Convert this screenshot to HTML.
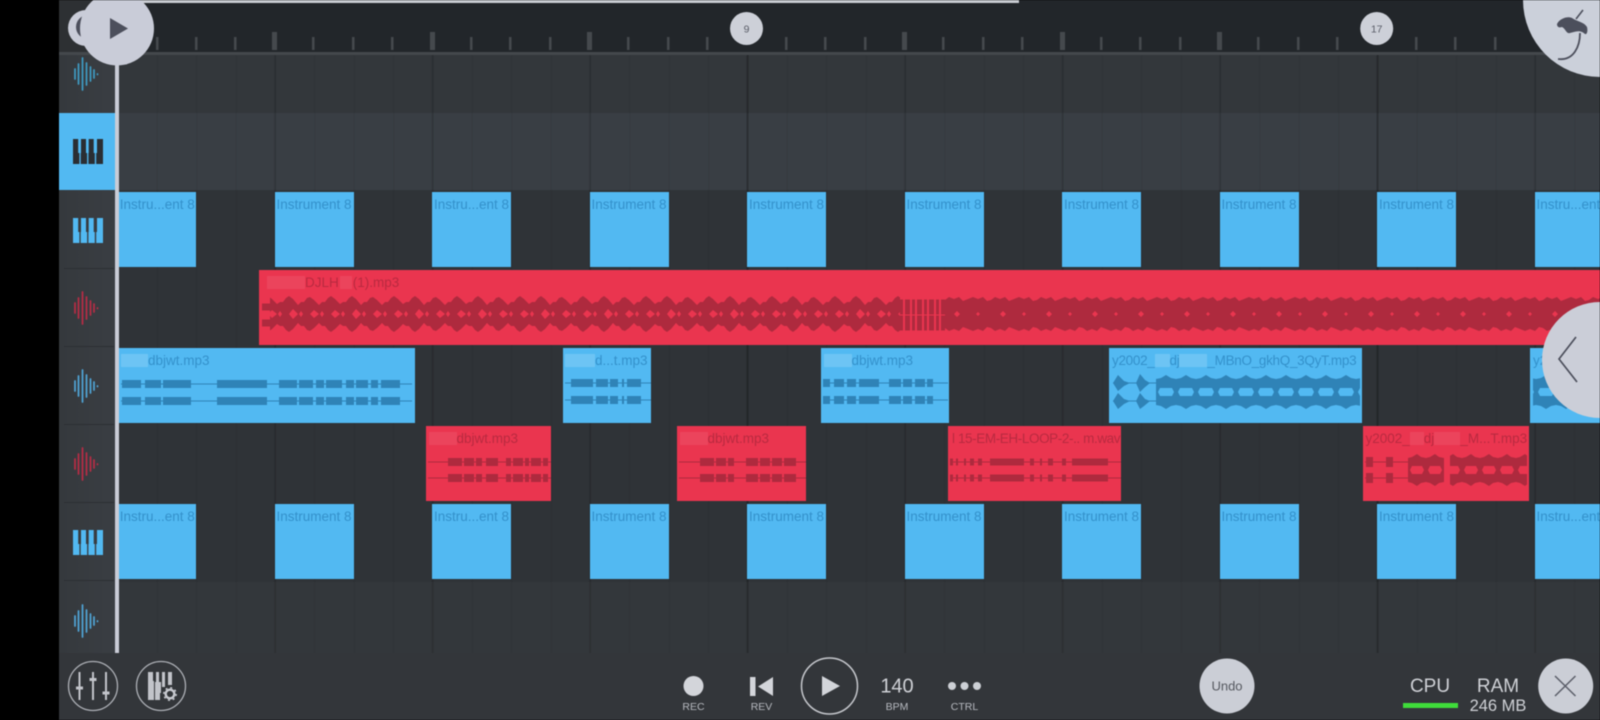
<!DOCTYPE html>
<html><head><meta charset="utf-8"><style>
html,body{margin:0;padding:0;background:#000;width:1600px;height:720px;overflow:hidden}
#w{position:relative;width:1600px;height:720px;overflow:hidden;background:#000;filter:blur(.55px);font-family:"Liberation Sans",sans-serif}
#w>div{position:absolute}
.clip{position:absolute;overflow:hidden;white-space:nowrap;font-size:13.5px;line-height:16px;padding-top:5px;box-sizing:border-box}
.b{background:#52b9f2;color:#3491cb;top:192px;height:75px;width:79px;text-align:center}
.r{background:#ea354f;color:#b92a40}
.a{background:#52b9f2;color:#3491cb}
.p{display:inline-block;height:13px;vertical-align:-2px;opacity:.16;background:#fff}
.lab{position:absolute;color:#b6b9bf;font-size:10.500px;line-height:12px;text-align:center;width:60px}
.grid{position:absolute;left:119px;width:1481px;background-image:linear-gradient(90deg,rgba(0,0,0,.14) 0 2px,transparent 2px),linear-gradient(90deg,rgba(0,0,0,.1) 0 2px,transparent 2px),linear-gradient(90deg,rgba(0,0,0,.07) 0 1px,transparent 1px);background-size:630px 100%,157.500px 100%,39.375px 100%;background-position:-2.500px 0,-2.500px 0,-1.500px 0}
</style></head><body><div id="w">
<div style="left:59px;top:0;width:1541px;height:720px;background:#33373b"></div>
<div style="left:59px;top:0;width:1541px;height:53px;background:#22262a"></div>
<div style="left:59px;top:0;width:60px;height:56px;background:#2d3033"></div>
<div style="left:119px;top:0;width:900px;height:3px;background:#c9ccd2"></div>
<div style="left:59px;top:52px;width:1541px;height:3px;background:#44484c"></div>
<div style="left:59px;top:55px;width:56px;height:598px;background:linear-gradient(90deg,#35393d,#3a3e43)"></div>
<div class="grid" style="top:55px;height:58px;background-color:#33373b"></div>
<div class="grid" style="top:113px;height:77px;background-color:#393e44"></div>
<div class="grid" style="top:190px;height:463px;background-color:#2f3337"></div>
<div style="left:119px;top:582px;width:1481px;height:71px;background:rgba(255,255,255,.025)"></div>
<div style="left:59px;top:113px;width:56px;height:77px;background:#52b9f2"></div>
<div style="left:64px;top:268px;width:50px;height:1px;background:#2c2f33"></div>
<div style="left:64px;top:346px;width:50px;height:1px;background:#2c2f33"></div>
<div style="left:64px;top:424px;width:50px;height:1px;background:#2c2f33"></div>
<div style="left:64px;top:502px;width:50px;height:1px;background:#2c2f33"></div>
<div style="left:64px;top:580px;width:50px;height:1px;background:#2c2f33"></div>
<div style="left:59px;top:653px;width:1541px;height:67px;background:#33363a"></div>

<!-- row 1 -->
<div class="clip b" style="left:119px;width:76.500px">Instru...ent 8</div>
<div class="clip b" style="left:274.500px">Instrument 8</div>
<div class="clip b" style="left:432px">Instru...ent 8</div>
<div class="clip b" style="left:589.500px">Instrument 8</div>
<div class="clip b" style="left:747px">Instrument 8</div>
<div class="clip b" style="left:904.500px">Instrument 8</div>
<div class="clip b" style="left:1062px">Instrument 8</div>
<div class="clip b" style="left:1219.500px">Instrument 8</div>
<div class="clip b" style="left:1377px">Instrument 8</div>
<div class="clip b" style="left:1534.500px">Instru...ent 8</div>
<!-- row 5 -->
<div class="clip b" style="top:504px;left:119px;width:76.500px">Instru...ent 8</div>
<div class="clip b" style="top:504px;left:274.500px">Instrument 8</div>
<div class="clip b" style="top:504px;left:432px">Instru...ent 8</div>
<div class="clip b" style="top:504px;left:589.500px">Instrument 8</div>
<div class="clip b" style="top:504px;left:747px">Instrument 8</div>
<div class="clip b" style="top:504px;left:904.500px">Instrument 8</div>
<div class="clip b" style="top:504px;left:1062px">Instrument 8</div>
<div class="clip b" style="top:504px;left:1219.500px">Instrument 8</div>
<div class="clip b" style="top:504px;left:1377px">Instrument 8</div>
<div class="clip b" style="top:504px;left:1534.500px">Instru...ent 8</div>
<!-- audio clips -->
<div class="clip r" style="left:259px;top:270px;width:1341px;height:75px;padding-left:8px"><span class="p" style="width:38px;opacity:.08"></span>DJLH<span class="p" style="width:12px;opacity:.08;margin:0 1px"></span>(1).mp3</div>
<div class="clip a" style="left:119px;top:348px;width:296px;height:75px;padding-left:2px"><span class="p" style="width:27px"></span>dbjwt.mp3</div>
<div class="clip a" style="left:563px;top:348px;width:88px;height:75px;padding-left:2px"><span class="p" style="width:30px"></span>d...t.mp3</div>
<div class="clip a" style="left:820.500px;top:348px;width:128px;height:75px;padding-left:3px"><span class="p" style="width:28px"></span>dbjwt.mp3</div>
<div class="clip a" style="left:1109px;top:348px;width:252.500px;height:75px;padding-left:3px;letter-spacing:-.3px">y2002_<span class="p" style="width:15px"></span>dj<span class="p" style="width:28px"></span>_MBnO_gkhQ_3QyT.mp3</div>
<div class="clip a" style="left:1530px;top:348px;width:70px;height:75px;padding-left:3px">y2002</div>
<div class="clip r" style="left:425.500px;top:426px;width:125.500px;height:75px;padding-left:3px"><span class="p" style="width:28px;opacity:.08"></span>dbjwt.mp3</div>
<div class="clip r" style="left:676.500px;top:426px;width:129.500px;height:75px;padding-left:3px"><span class="p" style="width:28px;opacity:.08"></span>dbjwt.mp3</div>
<div class="clip r" style="left:948px;top:426px;width:173px;height:75px;padding-left:4px;letter-spacing:-.4px">l 15-EM-EH-LOOP-2-.. m.wav</div>
<div class="clip r" style="left:1362.500px;top:426px;width:166.500px;height:75px;padding-left:3px">y2002_<span class="p" style="width:14px;opacity:.08"></span>dj<span class="p" style="width:26px;opacity:.08"></span>_M...T.mp3</div>

<svg width="1600" height="720" viewBox="0 0 1600 720" style="position:absolute;left:0;top:0">
<defs>
<g id="wv" fill="none" stroke="currentColor" stroke-width="1.700" stroke-linecap="round"><path d="M-8 -5V5M-4.500 -10V10M-0.500 -16V16M3.500 -11V11M7.500 -7V7M11 -4V4M14.500 0V.5"/></g>
<g id="pn" fill="currentColor"><rect x="73" y="0" width="5.200" height="16"/><rect x="73" y="14" width="6.400" height="11"/><rect x="81" y="0" width="5" height="16"/><rect x="80.700" y="14" width="6.400" height="11"/><rect x="88.700" y="0" width="5" height="16"/><rect x="88.400" y="14" width="6.400" height="11"/><rect x="97" y="0" width="6" height="16"/><rect x="96.200" y="14" width="6.800" height="11"/></g>
<pattern id="lobA" patternUnits="userSpaceOnUse" x="262" y="296" width="63" height="36">
<path fill="#ae2a3e" fill-rule="evenodd" d="M0 6L3 2L6 0L10 3L15 8L18 6L21 6L24 2L27 0L31 3L36 9L39 6L42 6L45 2L48 1L52 4L57 9L60 6L63 6V30L60 30L57 27L52 32L48 35L45 34L42 30L39 30L36 27L31 33L27 36L24 34L21 30L18 30L15 28L10 33L6 36L3 34L0 30ZM10 14L15 18L10 22L6 18ZM18 15L20 18L18 21L16 18ZM31 13L36 18L31 23L27 18ZM39 15L41 18L39 21L37 18ZM52 14L57 18L52 22L48 18ZM60 15L62 18L60 21L58 18Z"/>
</pattern>
<pattern id="lobB" patternUnits="userSpaceOnUse" x="945" y="296" width="46" height="36">
<path fill="#ae2a3e" fill-rule="evenodd" d="M0 4L4 1L9 3L14 1L18 5L23 3L28 1L33 3L38 1L42 5L46 4V32L42 31L38 35L33 33L28 35L23 33L18 31L14 35L9 33L4 35L0 32ZM12 15L15 18L12 21L9 18ZM33 16L35 18L33 20L31 18Z"/>
</pattern>
<pattern id="lenB" patternUnits="userSpaceOnUse" x="1156" y="372" width="20" height="40">
<path fill="#2f83b7" fill-rule="evenodd" d="M0 7L5 6L10 3L15 6L20 7V33L15 34L10 37L5 34L0 33ZM4 16H16L18 20L16 24H4L2 20Z"/>
</pattern>
<pattern id="lenR" patternUnits="userSpaceOnUse" x="1408" y="453" width="18" height="34">
<path fill="#ae2a3e" fill-rule="evenodd" d="M0 5L4 4L9 1L13 4L18 5V29L13 30L9 33L4 30L0 29ZM4 13H14L16 17L14 21H4L2 17Z"/>
</pattern>
</defs>
<!-- ruler ticks -->
<g fill="#45494d">
<rect x="156" y="37" width="2.500" height="13"/><rect x="195" y="37" width="2.500" height="13"/><rect x="234" y="37" width="2.500" height="13"/><rect x="272" y="32" width="5" height="18"/>
<rect x="312" y="37" width="2.500" height="13"/><rect x="352" y="37" width="2.500" height="13"/><rect x="391" y="37" width="2.500" height="13"/><rect x="430" y="32" width="5" height="18"/>
<rect x="470" y="37" width="2.500" height="13"/><rect x="509" y="37" width="2.500" height="13"/><rect x="549" y="37" width="2.500" height="13"/><rect x="587" y="32" width="5" height="18"/>
<rect x="627" y="37" width="2.500" height="13"/><rect x="667" y="37" width="2.500" height="13"/><rect x="706" y="37" width="2.500" height="13"/>
<rect x="785" y="37" width="2.500" height="13"/><rect x="824" y="37" width="2.500" height="13"/><rect x="864" y="37" width="2.500" height="13"/><rect x="902" y="32" width="5" height="18"/>
<rect x="942" y="37" width="2.500" height="13"/><rect x="982" y="37" width="2.500" height="13"/><rect x="1021" y="37" width="2.500" height="13"/><rect x="1060" y="32" width="5" height="18"/>
<rect x="1100" y="37" width="2.500" height="13"/><rect x="1139" y="37" width="2.500" height="13"/><rect x="1179" y="37" width="2.500" height="13"/><rect x="1217" y="32" width="5" height="18"/>
<rect x="1257" y="37" width="2.500" height="13"/><rect x="1297" y="37" width="2.500" height="13"/><rect x="1336" y="37" width="2.500" height="13"/>
<rect x="1415" y="37" width="2.500" height="13"/><rect x="1454" y="37" width="2.500" height="13"/><rect x="1494" y="37" width="2.500" height="13"/>
</g>
<!-- track icons -->
<use href="#wv" x="83" y="74" color="#3f9cc4"/>
<use href="#pn" y="139" color="#2a2e33"/>
<use href="#pn" y="218" color="#52b9f2"/>
<use href="#wv" x="83" y="308" color="#b92c45"/>
<use href="#wv" x="83" y="386" color="#50a6d8"/>
<use href="#wv" x="83" y="464" color="#b92c45"/>
<use href="#pn" y="530" color="#52b9f2"/>
<use href="#wv" x="83" y="621" color="#50a6d8"/>

<!-- long red wave -->
<rect x="270" y="296" width="630" height="36" fill="url(#lobA)"/>
<rect x="945" y="296" width="655" height="36" fill="url(#lobB)"/>
<path d="M900 307L945 307M900 323L945 323" stroke="#ae2a3e" stroke-width="15" stroke-dasharray="3 2 5 2" fill="none"/>
<path d="M262 307H272M262 323H272" stroke="#ae2a3e" stroke-width="7" fill="none"/>
<!-- blue waves -->
<g fill="none" stroke="#2f83b7">
<path d="M121 384H412M121 401H412M1113 383H1156M1113 401H1156M823 383H948M823 400H948M565 383H651M565 400H651" stroke-width="1"/>
<path d="M122 384h19M145 384h16M163 384h28M217 384h50M279 384h18M299 384h14M316 384h8M326 384h16M346 384h8M356 384h12M371 384h7M381 384h19M122 401h19M145 401h16M163 401h28M217 401h50M279 401h18M299 401h14M316 401h8M326 401h16M346 401h8M356 401h12M371 401h7M381 401h19" stroke-width="8"/>
<path d="M571 383h22M596 383h12M610 383h8M622 383h2M627 383h14M571 400h22M596 400h12M610 400h8M622 400h2M627 400h14" stroke-width="8"/>
<path d="M823 383h7M834 383h10M847 383h9M859 383h20M889 383h12M903 383h9M915 383h10M927 383h6M823 400h7M834 400h10M847 400h9M859 400h20M889 400h12M903 400h9M915 400h10M927 400h6" stroke-width="8"/>
</g>
<rect x="1156" y="372" width="204" height="40" fill="url(#lenB)"/>
<path d="M1113 383L1118 375L1124 381L1130 383L1124 386L1118 391ZM1113 401L1118 393L1124 399L1130 401L1124 404L1118 409ZM1136 383L1140 374L1145 380L1150 383L1144 388L1140 392ZM1136 401L1140 393L1145 399L1150 401L1144 406L1140 409Z" fill="#2f83b7"/>
<rect x="1533" y="372" width="40" height="40" fill="url(#lenB)"/>
<!-- red small waves -->
<g fill="none" stroke="#ae2a3e">
<path d="M428 462H551M428 478H551M679 462H806M679 478H806M951 462H1121M951 478H1121M1365 462H1408M1365 478H1408" stroke-width="1"/>
<path d="M448 462h14M464 462h10M476 462h6M486 462h12M506 462h5M513 462h10M525 462h4M531 462h10M543 462h5M448 478h14M464 478h10M476 478h6M486 478h12M506 478h5M513 478h10M525 478h4M531 478h10M543 478h5" stroke-width="8"/>
<path d="M700 462h14M716 462h10M728 462h6M746 462h12M760 462h10M772 462h10M784 462h12M700 478h14M716 478h10M728 478h6M746 478h12M760 478h10M772 478h10M784 478h12" stroke-width="8"/>
<path d="M950 462h3M956 462h2M964 462h2M970 462h4M978 462h4M990 462h34M1030 462h4M1040 462h2M1048 462h5M1062 462h4M1072 462h36M950 478h3M956 478h2M964 478h2M970 478h4M978 478h4M990 478h34M1030 478h4M1040 478h2M1048 478h5M1062 478h4M1072 478h36" stroke-width="7"/>
<path d="M1366 462h7M1386 462h7M1366 478h7M1386 478h7" stroke-width="10"/>
</g>
<rect x="1408" y="453" width="36" height="34" fill="url(#lenR)"/>
<rect x="1450" y="453" width="77" height="34" fill="url(#lenR)"/>

<!-- playhead -->
<rect x="115" y="55" width="4" height="598" fill="#c9ccd6"/>
<circle cx="86" cy="28" r="18" fill="#c9ccd8"/>
<circle cx="88" cy="27" r="12" fill="#4c4f5c"/>
<circle cx="117" cy="28.500" r="37" fill="#c9ccd8"/>
<path d="M110 18L128 28.500L110 39Z" fill="#4c4f5c"/>
<!-- number badges -->
<circle cx="746.500" cy="28.500" r="16.500" fill="#cdd0d8"/>
<circle cx="1376.700" cy="28.500" r="16.500" fill="#cdd0d8"/>
<text x="746.500" y="32.500" font-family="Liberation Sans" font-size="10.500" fill="#5a5d68" text-anchor="middle">9</text>
<text x="1376.700" y="32.500" font-family="Liberation Sans" font-size="10.500" fill="#5a5d68" text-anchor="middle">17</text>
<!-- top-right logo -->
<circle cx="1600" cy="0" r="77" fill="#cbd0da"/>
<path d="M1557 24C1560 18 1568 16 1572 18C1578 22 1584 22 1587 27C1588 31 1587 35 1585 34C1580 29 1574 32 1570 33C1566 34 1566 29 1562 27C1559 28 1557 27 1557 24Z" fill="#4c4f5c"/>
<path d="M1580 33C1580 46 1574 61 1558 59" fill="none" stroke="#4c4f5c" stroke-width="1.800"/>
<path d="M1583 10L1576 19" fill="none" stroke="#4c4f5c" stroke-width="1.600"/>
<!-- right chevron -->
<circle cx="1600" cy="360" r="58" fill="#cbced8"/>
<path d="M1576 337L1559 359L1577 382" fill="none" stroke="#4c4f5c" stroke-width="1.700"/>
<!-- bottom left buttons -->
<circle cx="93" cy="686" r="24.500" fill="none" stroke="#aeb1b7" stroke-width="1.300"/>
<circle cx="161" cy="686" r="24.500" fill="none" stroke="#aeb1b7" stroke-width="1.300"/>
<g fill="#c2c4ca">
<rect x="78.500" y="672" width="2" height="28"/><rect x="92" y="672" width="2" height="28"/><rect x="105" y="672" width="2" height="28"/>
<rect x="76" y="686.500" width="7" height="3" /><rect x="89.500" y="678" width="7" height="3"/><rect x="102.500" y="691.500" width="7" height="3"/>
<path d="M148 672h5v9h1v19h-6zM156 672h3v10h2v11h-1v7h-5v-18h1zM162 672h3v15h-3zM168 672h4v13h-4z"/>
</g>
<circle cx="170" cy="694" r="4.300" fill="none" stroke="#c8cad0" stroke-width="2.400"/>
<circle cx="170" cy="694" r="6.200" fill="none" stroke="#c8cad0" stroke-width="1.500" stroke-dasharray="2 2.870"/>
<!-- transport -->
<circle cx="693.500" cy="686" r="10" fill="#d3d5da"/>
<rect x="750" y="677" width="5.500" height="19" fill="#d3d5da"/>
<path d="M773 677V696L758 686.500Z" fill="#d3d5da"/>
<circle cx="829.500" cy="686" r="28" fill="none" stroke="#c6c8cd" stroke-width="1.500"/>
<path d="M822 676L840 686L822 696Z" fill="#d3d5da"/>
<circle cx="952" cy="686" r="4" fill="#cdd0d5"/><circle cx="964.500" cy="686" r="4" fill="#cdd0d5"/><circle cx="977" cy="686" r="4" fill="#cdd0d5"/>
<!-- undo / close -->
<circle cx="1227" cy="686" r="27.500" fill="#cbced6"/>
<circle cx="1565.700" cy="686" r="27.500" fill="#cbced6"/>
<path d="M1555 676L1575.500 696M1575.500 676L1555 696" stroke="#5a5d68" stroke-width="1.500" fill="none"/>
<rect x="1403" y="703" width="55" height="5" fill="#3fdc3a"/>
<g font-family="Liberation Sans" text-anchor="middle">
<text x="1227" y="690.500" font-size="13" fill="#55585f">Undo</text>
<text x="897" y="692.500" font-size="20" fill="#cfd1d6">140</text>
<text x="1430" y="692" font-size="19" fill="#cfd1d6">CPU</text>
<text x="1498" y="692" font-size="19" fill="#cfd1d6">RAM</text>
<text x="1498" y="711" font-size="16.500" fill="#cfd1d6">246 MB</text>
</g>
</svg>
<div class="lab" style="left:663.500px;top:701px">REC</div>
<div class="lab" style="left:731.500px;top:701px">REV</div>
<div class="lab" style="left:867px;top:701px">BPM</div>
<div class="lab" style="left:934.500px;top:701px">CTRL</div>
</div></body></html>
